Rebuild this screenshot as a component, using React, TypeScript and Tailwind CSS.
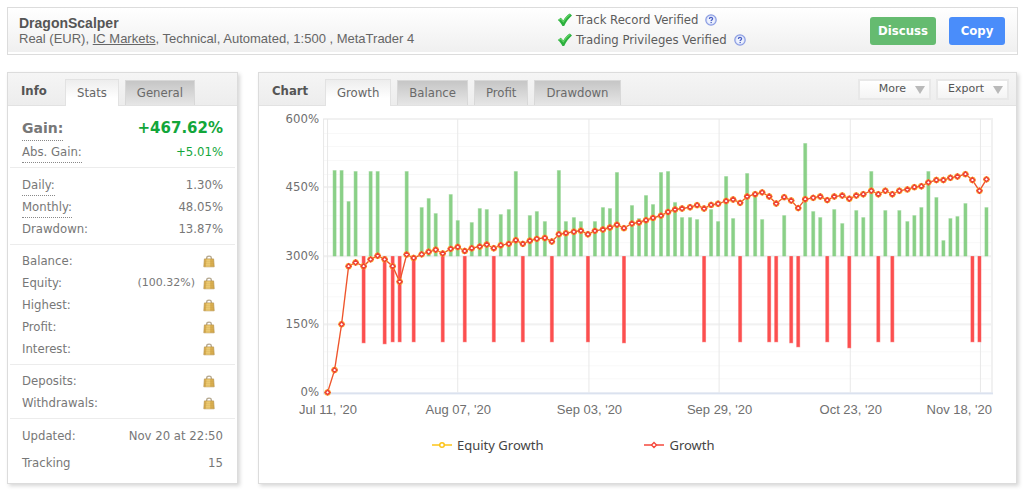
import React, { useState } from "react";

const TAHOMA = "font-['DejaVu_Sans_Condensed','Noto_Sans',sans-serif]";

const GROWTH = [
  0, 49, 149.5, 277, 285, 277, 292, 300, 292, 277, 243, 302.5, 295, 303, 308.5, 313, 305, 315, 319,
  310.5, 316.5, 320, 324.5, 316.5, 323, 326, 334, 326, 333, 337, 339, 331, 347, 349.5, 352.5, 355,
  347, 354.5, 357.5, 362, 368, 360.5, 370.5, 373, 378, 383, 388, 396, 401.5, 403.5, 406.5, 411,
  403.5, 411.5, 414, 420, 423.5, 416, 430, 435, 439, 430, 414.5, 428.5, 421, 404.5, 424, 427, 430,
  422, 430, 432, 425, 432, 435, 442.5, 435, 442.5, 435, 442.5, 445.5, 450.5, 452.5, 461, 466, 466,
  471, 474, 479, 466, 442.5, 467.6,
];

const BARS = [
  0, 86, 86, 55, 85, -87, 85, 85, -88, -86, -86, 85, -86, 49, 58, 43, -86, 62, 36, -86, 34, 48, 47,
  -86, 42, 47, 85, -86, 41, 45, 35, -86, 86, 35, 39, 35, -86, 35, 49, 48, 84, -87, 51, 38, 61, 52,
  84, 85, 54, 39, 39, 37, -86, 47, 35, 80, 38, -86, 83, 61, 37, -86, -86, 41, -87, -91, 113, 45, 39,
  -86, 47, 33, -92, 46, 39, 85, -86, 46, -86, 46, 35, 41, 49, 85, 59, 16, 38, 40, 53, -86, -86, 49,
];

const X_LABELS = ["Jul 11, '20", "Aug 07, '20", "Sep 03, '20", "Sep 29, '20", "Oct 23, '20", "Nov 18, '20"];

const xAt = (i: number) => 48 + Math.floor(i * 7.24) + 0.5;
const yAt = (pct: number) => 286 - pct * 0.455;

function GrowthChart() {
  const line = GROWTH.map((g, i) => `${xAt(i)},${yAt(g)}`).join(" ");
  return (
    <svg viewBox="0 0 736 314" className="block w-full" role="img" aria-label="Growth chart">
      {Array.from({ length: 20 }, (_, i) => (
        <rect key={i} x="44" y={13 + Math.round((i + 1) * 13.65)} width="669" height="1" fill="#f8f8f8" />
      ))}
      {[0, 1, 2, 3].map((i) => (
        <rect key={i} x="44" y={12 + Math.round(i * 68.25)} width="669" height="2" fill="#f1f1f1" />
      ))}
      {X_LABELS.map((label, i) => (
        <rect key={label} x={48 + Math.round(i * 130.4)} y="13" width="1" height="273" fill="#e8e8e8" />
      ))}
      <rect x="44" y="13" width="1" height="273" fill="#e8e8e8" />
      <rect x="711" y="13" width="2" height="273" fill="#f1f1f1" />
      <rect x="44" y="286" width="669" height="2" fill="#dbe2ef" />
      {BARS.map((b, i) =>
        b === 0 ? null : (
          <g key={i} fill={b > 0 ? "#7fcb7c" : "#fb4040"}>
            <rect x={xAt(i) - 2} y={b > 0 ? 150 - b : 150} width="4" height={Math.abs(b)} opacity="0.45" />
            <rect x={xAt(i) - 1.5} y={b > 0 ? 150.5 - b : 150} width="3" height={Math.abs(b) - 0.5} opacity="0.85" />
          </g>
        ),
      )}
      <polyline points={line} fill="none" stroke="#f9c32f" strokeWidth="1.6" opacity="0.4" />
      <polyline points={line} fill="none" stroke="#ee4a32" strokeWidth="1.2" />
      {GROWTH.map((g, i) => (
        <g key={i}>
          <circle cx={xAt(i)} cy={yAt(g)} r="2.7" fill="none" stroke="#fbb52d" strokeWidth="1" />
          <path
            d={`M${xAt(i)} ${yAt(g) - 2.4}l2.4 2.4l-2.4 2.4l-2.4 -2.4z`}
            fill="#fff"
            stroke="#ee3f34"
            strokeWidth="1.5"
          />
        </g>
      ))}
      <g className={`${TAHOMA} text-[13px]`} fill="#6f6f6f" textAnchor="end">
        {[600, 450, 300, 150, 0].map((v, i) => (
          <text key={v} x="40" y={17 + Math.round(i * 68.25)}>
            {v}%
          </text>
        ))}
      </g>
      <g className="font-['Liberation_Sans',sans-serif] text-[13px]" fill="#6f6f6f">
        {X_LABELS.map((label, i) => (
          <text
            key={label}
            x={i === 5 ? 712 : 49 + Math.round(i * 130.4)}
            y="308"
            textAnchor={i === 5 ? "end" : "middle"}
          >
            {label}
          </text>
        ))}
      </g>
    </svg>
  );
}

function Tick() {
  return (
    <svg viewBox="0 0 16 14" className="h-[14px] w-4 shrink-0" aria-hidden="true">
      <path
        d="M0.8 7L3.8 4.8L6.3 7.4C8 4.4 10.2 1.9 12.8 0.4L15 2.6C11.8 5.2 9.4 8.8 7.2 13L5.4 13C4.2 10.6 2.8 8.6 0.8 7Z"
        fill="#2cb03e"
      />
      <path d="M2 7L3.8 5.9L6.4 8.8C8.4 5.4 10.5 3 12.9 1.5" fill="none" stroke="#63d467" strokeWidth="1.1" />
    </svg>
  );
}

function Help() {
  return (
    <svg viewBox="0 0 12 12" className="size-3 shrink-0" aria-hidden="true">
      <circle cx="6" cy="6" r="5.2" fill="#d3dcf8" stroke="#8c9de2" strokeWidth="1.2" />
      <circle cx="6" cy="6" r="3.8" fill="#eef2fd" />
      <path d="M4.4 4.9C4.4 2.8 7.6 2.8 7.6 4.8C7.6 5.9 6.1 5.9 6.1 7.1" fill="none" stroke="#4a5fc4" strokeWidth="1.3" />
      <rect x="5.5" y="7.9" width="1.3" height="1.2" fill="#4a5fc4" />
    </svg>
  );
}

function Lock() {
  return (
    <svg viewBox="0 0 12 13" className="h-[13px] w-3" role="img" aria-label="Private">
      <path d="M3.7 4.4V3C3.7 0.6 8.3 0.6 8.3 3V4.4" fill="none" stroke="#b5a88f" strokeWidth="1.3" />
      <path d="M1.4 3.9H10.6L11.2 11.8H0.8Z" fill="#dcb152" stroke="#b9944a" strokeWidth="0.7" />
      <path d="M3.4 4.4H7.2V11.4H3Z" fill="#f1d17a" />
      <path d="M1.4 6.2H10.6M1.2 8.2H10.8M1 10.2H11" stroke="#bd9440" strokeWidth="0.6" opacity="0.6" />
    </svg>
  );
}

function Row({ label, dotted, children }: { label: string; dotted?: boolean; children?: React.ReactNode }) {
  return (
    <div className="flex h-[22px] items-stretch justify-between leading-[22px]">
      <dt className={dotted ? "border-b border-dotted border-[#888]" : ""}>{label}</dt>
      <dd className="flex items-center">{children}</dd>
    </div>
  );
}

function LockRow({ label, note }: { label: string; note?: string }) {
  return (
    <Row label={label}>
      {note && <span className="mr-2 font-['DejaVu_Sans',sans-serif] text-[11px]">{note}</span>}
      <span className="mr-2">
        <Lock />
      </span>
    </Row>
  );
}

function Tabs({ names, active, onPick }: { names: string[]; active: string; onPick: (n: string) => void }) {
  return (
    <div role="tablist" className="flex gap-[6px] self-end">
      {names.map((n) => (
        <button
          key={n}
          type="button"
          role="tab"
          aria-selected={n === active}
          onClick={() => onPick(n)}
          className={
            n === active
              ? "-mb-px h-[27px] border border-b-0 border-[#e2e2e2] bg-linear-to-b from-[#ededed] to-white to-70% px-[11px] text-[#666]"
              : "h-[25px] self-end border border-b-0 border-[#d8d8d8] bg-linear-to-b from-[#c6c6c6] to-[#e6e6e6] px-[11px] text-[#6a6a6a]"
          }
        >
          {n}
        </button>
      ))}
    </div>
  );
}

function MenuButton({ label }: { label: string }) {
  return (
    <button
      type="button"
      aria-haspopup="menu"
      className="flex h-[21px] w-[73px] items-center justify-end gap-[9px] border-2 border-[#e8e8e8] bg-linear-to-b from-white to-[#f4f4f4] pt-px pr-1 font-['DejaVu_Sans',sans-serif] text-[11px] text-[#555]"
    >
      {label}
      <svg viewBox="0 0 10 8" className="h-2 w-[10px]" aria-hidden="true">
        <path d="M0 0H10L5 8Z" fill="#b9b9b9" />
      </svg>
    </button>
  );
}

const PANEL = "border border-[#dcdcdc] bg-white shadow-[2px_2px_4px_rgba(0,0,0,0.16)]";
const BAR = "flex h-[33px] border-b border-[#e2e2e2] bg-linear-to-b from-[#f5f5f5] to-[#ededed]";
const GROUP = "mx-[2px] border-b border-[#ececec] px-3";

export default function App() {
  const [info, setInfo] = useState("Stats");
  const [chart, setChart] = useState("Growth");
  return (
    <div className={`bg-white px-[7px] pt-[7px] pb-2 text-[13px] text-[#777] ${TAHOMA}`}>
      <header className="mr-[-1px] flex h-12 items-center border border-[#dcdcdc] bg-linear-to-b from-white to-[#efefef] pr-3 pl-[11px] shadow-[inset_0_-2px_0_white]">
        <div className="w-[538px] font-['Liberation_Sans',sans-serif] leading-4 text-[#666]">
          <h1 className="text-[14px] font-bold text-[#555]">DragonScalper</h1>
          <p>
            Real (EUR),{" "}
            <a href="#broker" className="underline">
              IC Markets
            </a>
            , Technical, Automated, 1:500 , MetaTrader 4
          </p>
        </div>
        <ul className="pb-[3px] leading-5 text-[#5c5c5c]">
          {["Track Record Verified", "Trading Privileges Verified"].map((t) => (
            <li key={t} className="flex items-center gap-[3px]">
              <Tick />
              {t}
              <span className="ml-1">
                <Help />
              </span>
            </li>
          ))}
        </ul>
        <div className="ml-auto flex gap-[13px] font-bold text-white">
          <button type="button" className="h-7 w-[66px] rounded-[3px] bg-[#65bb70]">
            Discuss
          </button>
          <button type="button" className="h-7 w-14 rounded-[3px] bg-[#4a8dfa]">
            Copy
          </button>
        </div>
      </header>

      <main className="mt-[17px] flex gap-5">
        <section className={`w-[231px] shrink-0 ${PANEL}`}>
          <div className={BAR}>
            <h2 className="w-[57px] self-center pt-1 pl-[13px] font-bold text-[#555]">Info</h2>
            <Tabs names={["Stats", "General"]} active={info} onPick={setInfo} />
          </div>
          <dl>
            <div className={`${GROUP} pt-[11px] pb-1`}>
              <div className="flex h-6 items-stretch justify-between font-['DejaVu_Sans',sans-serif] leading-[22px] font-bold">
                <dt className="border-b border-dotted border-[#888] text-[14px]">Gain:</dt>
                <dd className="text-[15px] text-[#12a63a]">+467.62%</dd>
              </div>
              <Row label="Abs. Gain:" dotted>
                <span className="text-[#12a63a]">+5.01%</span>
              </Row>
            </div>
            <div className={`${GROUP} pt-[6px] pb-1`}>
              <Row label="Daily:" dotted>
                1.30%
              </Row>
              <Row label="Monthly:" dotted>
                48.05%
              </Row>
              <Row label="Drawdown:">13.87%</Row>
            </div>
            <div className={`${GROUP} pt-[5px] pb-1`}>
              <LockRow label="Balance:" />
              <LockRow label="Equity:" note="(100.32%)" />
              <LockRow label="Highest:" />
              <LockRow label="Profit:" />
              <LockRow label="Interest:" />
            </div>
            <div className={`${GROUP} pt-[5px] pb-1`}>
              <LockRow label="Deposits:" />
              <LockRow label="Withdrawals:" />
            </div>
            <div className="mx-[2px] space-y-[5px] px-3 pt-[6px] pb-[9px]">
              <Row label="Updated:">Nov 20 at 22:50</Row>
              <Row label="Tracking">15</Row>
            </div>
          </dl>
        </section>

        <section className={`min-w-0 flex-1 ${PANEL}`}>
          <div className={BAR}>
            <h2 className="w-[66px] self-center pt-1 pl-[13px] font-bold text-[#555]">Chart</h2>
            <Tabs names={["Growth", "Balance", "Profit", "Drawdown"]} active={chart} onPick={setChart} />
            <div className="ml-auto flex items-center gap-[5px] pr-[7px]">
              <MenuButton label="More" />
              <MenuButton label="Export" />
            </div>
          </div>
          <div className="pl-5">
            <GrowthChart />
          </div>
          <div className="flex gap-[101px] pt-[15px] pl-[173px] font-['Noto_Sans',sans-serif] text-[13px] leading-5 text-[#444]">
            <span className="flex items-center gap-[5px]">
              <svg viewBox="0 0 20 8" className="h-2 w-5" aria-hidden="true">
                <path d="M0 4H20" stroke="#fcc419" strokeWidth="1.5" />
                <circle cx="10" cy="4" r="2.3" fill="#fff" stroke="#fcc419" strokeWidth="1.5" />
              </svg>
              Equity Growth
            </span>
            <span className="flex items-center gap-[5px]">
              <svg viewBox="0 0 20 8" className="h-2 w-5" aria-hidden="true">
                <path d="M0 4H20" stroke="#f5483c" strokeWidth="1.5" />
                <path d="M10 1.5L12.5 4L10 6.5L7.5 4Z" fill="#fff" stroke="#f5483c" strokeWidth="1.4" />
              </svg>
              Growth
            </span>
          </div>
        </section>
      </main>
    </div>
  );
}
